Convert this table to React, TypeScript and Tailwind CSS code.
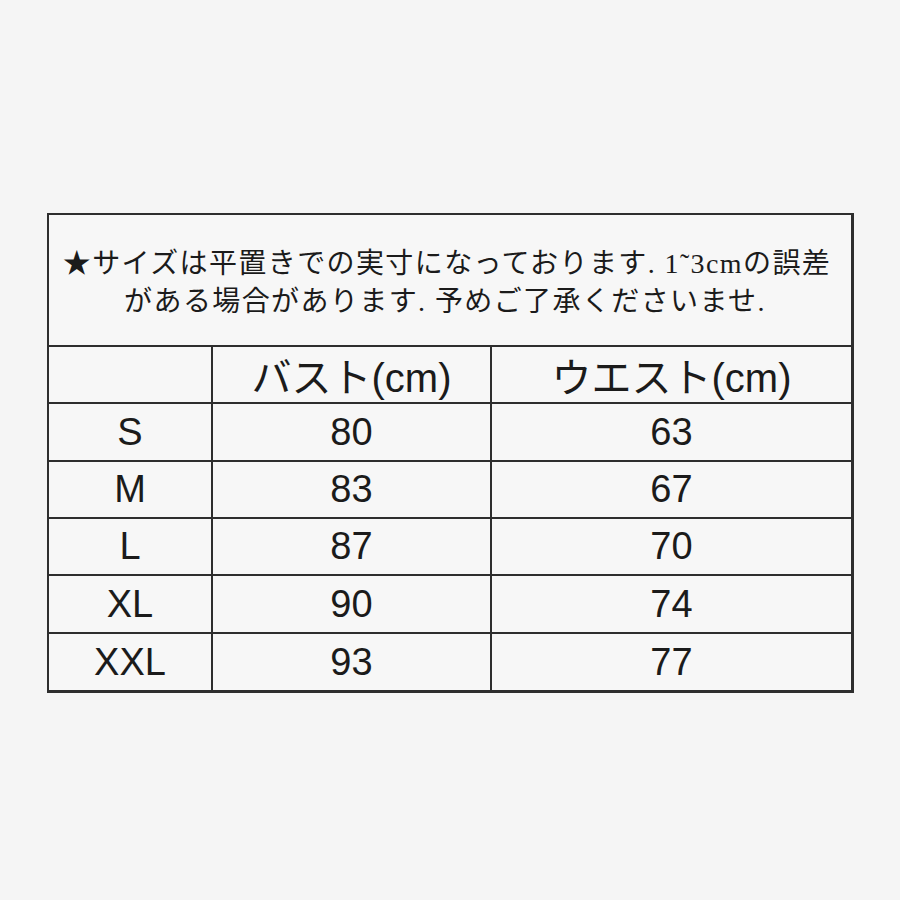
import React from "react";

const rows = [
  { size: "S", bust: "80", waist: "63", h: "h-[58px]" },
  { size: "M", bust: "83", waist: "67", h: "h-[57px]" },
  { size: "L", bust: "87", waist: "70", h: "h-[57px]" },
  { size: "XL", bust: "90", waist: "74", h: "h-[58px]" },
  { size: "XXL", bust: "93", waist: "77", h: "h-[58px]" },
];

const sans = "[font-family:'Liberation_Sans','Noto_Sans_CJK_JP',sans-serif]";

export default function App() {
  return (
    <div className="w-[900px] h-[900px] bg-[#f5f5f5] pt-[213px] pl-[47px]">
      <div className="w-[807px] bg-[#f7f7f7] border-t-2 border-l-2 border-r-[3px] border-b-[3px] border-[#2e2e2e] text-[#1b1b1b]">
        <div className="h-[130px] flex flex-col items-center justify-center pt-[6px] text-[28px] leading-[38px] tracking-[1.4px] [font-family:'Liberation_Serif','Noto_Sans_CJK_JP',serif]">
          <div className="-ml-[6px]">★サイズは平置きでの実寸になっております. 1˜3cmの誤差</div>
          <div className="-ml-[10px]">がある場合があります. 予めご了承くださいませ.</div>
        </div>
        <div className={`flex border-t-2 border-[#2e2e2e] h-[57px] ${sans}`}>
          <div className="w-[162px]" />
          <div className="w-[279px] border-l-2 border-[#2e2e2e] flex items-center justify-center pt-[6px] text-[40px]">
            バスト(cm)
          </div>
          <div className="flex-1 border-l-2 border-[#2e2e2e] flex items-center justify-center pt-[6px] text-[40px]">
            ウエスト(cm)
          </div>
        </div>
        {rows.map((r) => (
          <div key={r.size} className={`flex border-t-2 border-[#2e2e2e] ${r.h} ${sans} text-[38px]`}>
            <div className="w-[162px] flex items-center justify-center">{r.size}</div>
            <div className="w-[279px] border-l-2 border-[#2e2e2e] flex items-center justify-center">{r.bust}</div>
            <div className="flex-1 border-l-2 border-[#2e2e2e] flex items-center justify-center">{r.waist}</div>
          </div>
        ))}
      </div>
    </div>
  );
}
